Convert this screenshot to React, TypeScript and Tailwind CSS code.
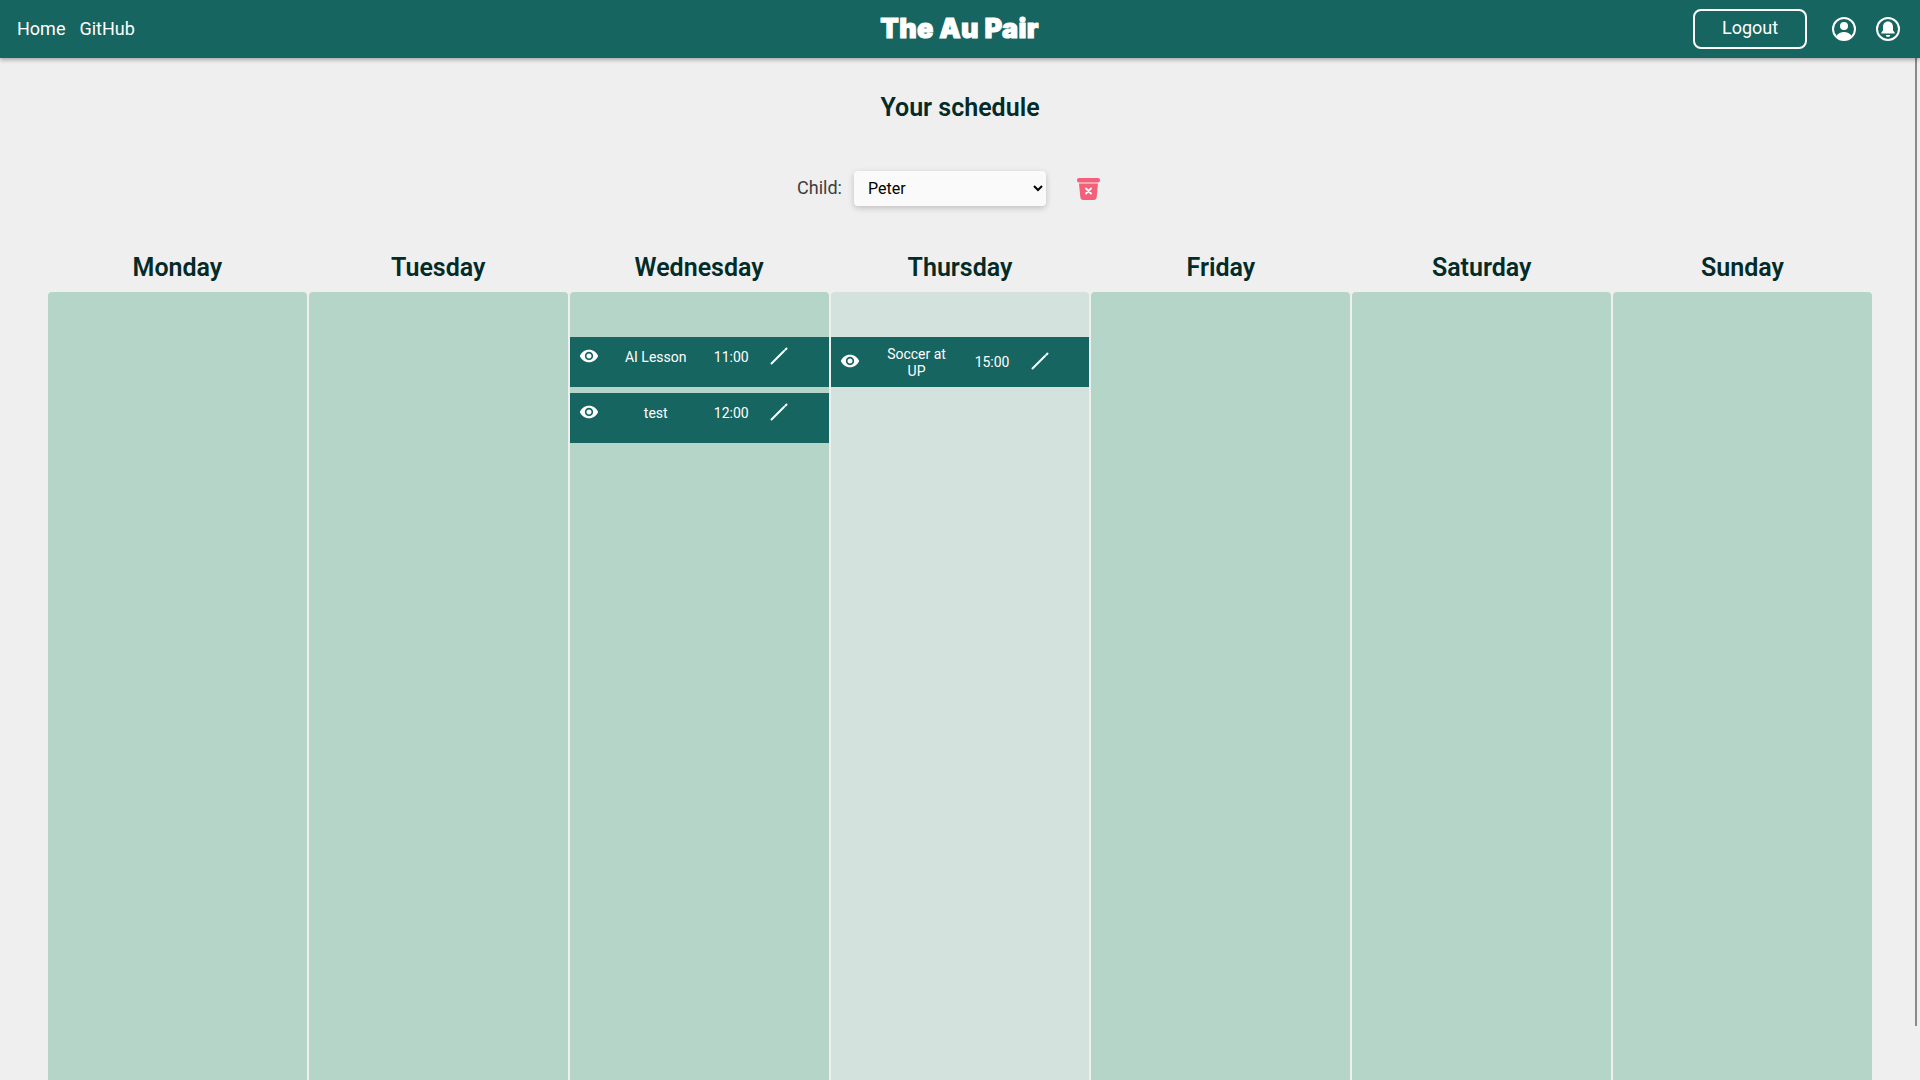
const DAYS = ["Monday", "Tuesday", "Wednesday", "Thursday", "Friday", "Saturday", "Sunday"];

type Item = { title: string; time: string };

// temp data, same as the picture
const SCHEDULE: Record<string, Item[]> = {
  Wednesday: [
    { title: "AI Lesson", time: "11:00" },
    { title: "test", time: "12:00" },
  ],
  Thursday: [{ title: "Soccer at UP", time: "15:00" }],
};

function UserIcon() {
  return (
    <svg width="24" height="24" viewBox="0 0 24 24" fill="none">
      <circle cx="12" cy="12" r="11" stroke="white" strokeWidth="2" />
      <circle cx="12" cy="9" r="4" fill="white" />
      <path d="M4.500 19.200C6 16 9 15 12 15s6 1 7.500 4.200C17.600 21.600 15 23 12 23s-5.600-1.400-7.500-3.800z" fill="white" />
    </svg>
  );
}

function BellIcon() {
  return (
    <svg width="24" height="24" viewBox="0 0 24 24" fill="none">
      <circle cx="12" cy="12" r="11" stroke="white" strokeWidth="2" />
      <path d="M12 4.600c-3.100 0-5 2.400-5 5.400v3.400l-1.700 2.200v1h13.400v-1L17 13.400V10c0-3-1.900-5.400-5-5.400z" fill="white" />
      <path d="M9.800 18h4.400c0 1.200-1 2-2.200 2s-2.200-.8-2.200-2z" fill="white" />
    </svg>
  );
}

function EyeIcon() {
  return (
    <svg width="20" height="20" viewBox="0 0 24 24" fill="white">
      <path d="M12 4.500C7 4.500 2.730 7.610 1 12c1.730 4.390 6 7.500 11 7.500s9.270-3.110 11-7.500c-1.730-4.390-6-7.500-11-7.500zM12 17c-2.760 0-5-2.240-5-5s2.240-5 5-5 5 2.240 5 5-2.240 5-5 5zm0-8c-1.660 0-3 1.340-3 3s1.340 3 3 3 3-1.340 3-3-1.340-3-3-3z" />
    </svg>
  );
}

function PencilIcon() {
  return (
    <svg width="18" height="18" viewBox="0 0 18 18" fill="none" stroke="white" strokeLinecap="round">
      <path d="M1.500 16.500L14 4" strokeWidth="2" />
      <path d="M15.300 2.700L16.500 1.500" strokeWidth="2" />
    </svg>
  );
}

function TrashIcon() {
  return (
    <svg width="23" height="22" viewBox="0 0 23 22">
      <rect x="0" y="0" width="23" height="4.500" rx="2" fill="#f2607a" />
      <path d="M2 5.500h19l-1.300 13.500c-.2 1.700-1.300 3-3 3H6.300c-1.700 0-2.800-1.300-3-3z" fill="#f2607a" />
      <path d="M9 10.500l5 5M14 10.500l-5 5" stroke="white" strokeWidth="1.800" strokeLinecap="round" />
    </svg>
  );
}

function ScheduleRow({ item }: { item: Item }) {
  const oneLine = item.title.length < 10;
  return (
    <div className={`flex items-center h-[50px] bg-[#176560] text-white text-sm leading-[17px] ${oneLine ? "pb-3" : ""}`}>
      <div className={`w-[38px] flex justify-center ${oneLine ? "" : "mb-0.5"}`}>
        <EyeIcon />
      </div>
      <div className="w-[96px] px-3 pt-0.5 text-center">{item.title}</div>
      <div className={`w-[54px] pl-px text-center ${oneLine ? "pt-0.5" : ""}`}>{item.time}</div>
      <div className={`w-[42px] flex justify-center ${oneLine ? "" : "mb-0.5"}`}>
        <PencilIcon />
      </div>
    </div>
  );
}

export default function App() {
  return (
    <div className="relative h-screen overflow-hidden bg-[#efefef] font-['Roboto',sans-serif]">
      <header className="relative z-10 flex items-center justify-between h-[58px] pl-[17px] pr-[20px] bg-[#176560] text-white shadow-[0_2px_4px_rgba(0,0,0,0.3)]">
        <nav className="flex-1 flex gap-[14px] text-lg">
          <a>Home</a>
          <a>GitHub</a>
        </nav>
        <div className="pl-0.5 pt-px font-['Inter',sans-serif] font-black text-[27px] tracking-[0.3px] [-webkit-text-stroke:1px_white]">
          The Au Pair
        </div>
        <div className="flex-1 flex items-center justify-end">
          <button className="w-[114px] h-[40px] pb-[3px] border-2 border-white rounded-lg text-lg">Logout</button>
          <div className="ml-[25px]">
            <UserIcon />
          </div>
          <div className="ml-[20px]">
            <BellIcon />
          </div>
        </div>
      </header>

      <main className="text-[#032b28]">
        <h1 className="mt-[33px] text-[25px] leading-[34px] font-semibold text-center">Your schedule</h1>

        <div className="mt-[46px] flex items-center justify-center">
          <label className="pb-0.5 text-lg text-[#3d3d3d] mr-[12px]">Child:</label>
          <select className="w-[192px] h-[35px] pl-[10px] bg-[#fafafa] text-black rounded shadow-[0_2px_6px_rgba(0,0,0,0.2)]">
            <option>Peter</option>
          </select>
          <button className="ml-[31px] mr-[23px] flex">
            <TrashIcon />
          </button>
        </div>

        <div className="mt-[45px] px-12 grid grid-cols-7 gap-x-0.5">
          {DAYS.map((day) => (
            <div key={day}>
              <h2 className="text-[25px] leading-[34px] font-semibold text-center mb-[7px]">{day}</h2>
              <div className={`h-[1000px] rounded-t pt-[45px] flex flex-col gap-[6px] ${day === "Thursday" ? "bg-[#d3e2dc]" : "bg-[#b5d5c8]"}`}>
                {(SCHEDULE[day] ?? []).map((item) => (
                  <ScheduleRow key={item.title} item={item} />
                ))}
              </div>
            </div>
          ))}
        </div>
      </main>

      {/* overlay scrollbar thumb */}
      <div className="absolute top-[58px] left-[1915px] w-[2px] h-[968px] bg-[#8a8a8a]" />
    </div>
  );
}
